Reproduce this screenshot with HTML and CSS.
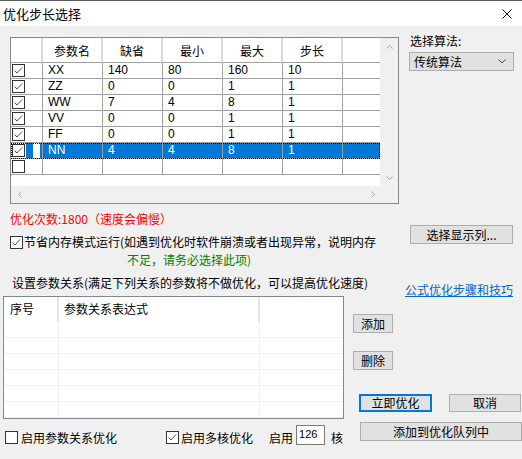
FILE: index.html
```html
<!DOCTYPE html>
<html lang="zh-CN">
<head>
<meta charset="utf-8">
<title>优化步长选择</title>
<link rel="stylesheet" href="styles.css">
</head>
<body>
<div class="window">
  <div class="titlebar">
    <span class="title">优化步长选择</span>
    <svg class="close" width="10" height="10" viewBox="0 0 10 10"><path d="M0.5 0.5L9.5 9.5M9.5 0.5L0.5 9.5" stroke="#000" stroke-width="1" fill="none"/></svg>
  </div>
  <div class="content">
    <div class="top">
      <div class="grid">
        <div class="grid-main">
          <div class="gview">
            <div class="grow ghead">
              <div class="gc"></div><div class="gc">参数名</div><div class="gc">缺省</div><div class="gc">最小</div><div class="gc">最大</div><div class="gc">步长</div><div class="gc last"></div>
            </div>
            <div class="grow">
              <div class="gc chk"><svg class="cb" viewBox="0 0 13 13"><rect x=".5" y=".5" width="12" height="12" fill="#fff" stroke="#333"/><path d="M2.5 6.5l2.5 2.5 5-5.5" fill="none" stroke="#555"/></svg></div>
              <div class="gc">XX</div><div class="gc">140</div><div class="gc">80</div><div class="gc">160</div><div class="gc">10</div><div class="gc last"></div>
            </div>
            <div class="grow">
              <div class="gc chk"><svg class="cb" viewBox="0 0 13 13"><rect x=".5" y=".5" width="12" height="12" fill="#fff" stroke="#333"/><path d="M2.5 6.5l2.5 2.5 5-5.5" fill="none" stroke="#555"/></svg></div>
              <div class="gc">ZZ</div><div class="gc">0</div><div class="gc">0</div><div class="gc">1</div><div class="gc">1</div><div class="gc last"></div>
            </div>
            <div class="grow">
              <div class="gc chk"><svg class="cb" viewBox="0 0 13 13"><rect x=".5" y=".5" width="12" height="12" fill="#fff" stroke="#333"/><path d="M2.5 6.5l2.5 2.5 5-5.5" fill="none" stroke="#555"/></svg></div>
              <div class="gc">WW</div><div class="gc">7</div><div class="gc">4</div><div class="gc">8</div><div class="gc">1</div><div class="gc last"></div>
            </div>
            <div class="grow">
              <div class="gc chk"><svg class="cb" viewBox="0 0 13 13"><rect x=".5" y=".5" width="12" height="12" fill="#fff" stroke="#333"/><path d="M2.5 6.5l2.5 2.5 5-5.5" fill="none" stroke="#555"/></svg></div>
              <div class="gc">VV</div><div class="gc">0</div><div class="gc">0</div><div class="gc">1</div><div class="gc">1</div><div class="gc last"></div>
            </div>
            <div class="grow">
              <div class="gc chk"><svg class="cb" viewBox="0 0 13 13"><rect x=".5" y=".5" width="12" height="12" fill="#fff" stroke="#333"/><path d="M2.5 6.5l2.5 2.5 5-5.5" fill="none" stroke="#555"/></svg></div>
              <div class="gc">FF</div><div class="gc">0</div><div class="gc">0</div><div class="gc">1</div><div class="gc">1</div><div class="gc last"></div>
            </div>
            <div class="grow sel">
              <div class="gc chk"><svg class="cb" viewBox="0 0 13 13"><rect x=".5" y=".5" width="12" height="12" fill="#fff" stroke="#333"/><path d="M2.5 6.5l2.5 2.5 5-5.5" fill="none" stroke="#555"/></svg></div>
              <div class="gc">NN</div><div class="gc">4</div><div class="gc">4</div><div class="gc">8</div><div class="gc">1</div><div class="gc last"></div>
            </div>
            <div class="grow">
              <div class="gc chk"><svg class="cb" viewBox="0 0 13 13"><rect x=".5" y=".5" width="12" height="12" fill="#fff" stroke="#333"/></svg></div>
              <div class="gc"></div><div class="gc"></div><div class="gc"></div><div class="gc"></div><div class="gc"></div><div class="gc last"></div>
            </div>
          </div>
          <div class="vscroll">
            <svg width="7" height="4" viewBox="0 0 7 4"><path d="M0.5 3.5L3.5 0.5L6.5 3.5" fill="none" stroke="#a6a6a6"/></svg>
            <svg width="7" height="4" viewBox="0 0 7 4"><path d="M0.5 0.5L3.5 3.5L6.5 0.5" fill="none" stroke="#a6a6a6"/></svg>
          </div>
        </div>
        <div class="hrow">
          <div class="hscroll">
            <svg width="4" height="7" viewBox="0 0 4 7"><path d="M3.5 0.5L0.5 3.5L3.5 6.5" fill="none" stroke="#a6a6a6"/></svg>
            <svg width="4" height="7" viewBox="0 0 4 7"><path d="M0.5 0.5L3.5 3.5L0.5 6.5" fill="none" stroke="#a6a6a6"/></svg>
          </div>
          <div class="corner"></div>
        </div>
      </div>
      <div class="algo">
        <div class="algo-label">选择算法:</div>
        <div class="combo">
          <span>传统算法</span>
          <svg width="8" height="5" viewBox="0 0 8 5"><path d="M0.5 0.5L4 4L7.5 0.5" fill="none" stroke="#444"/></svg>
        </div>
      </div>
    </div>

    <div class="count">优化次数:1800（速度会偏慢）</div>

    <div class="mem">
      <div class="memleft">
        <svg class="cb" viewBox="0 0 13 13"><rect x=".5" y=".5" width="12" height="12" fill="#fff" stroke="#333"/><path d="M2.5 6.5l2.5 2.5 5-5.5" fill="none" stroke="#555"/></svg>
        <div class="memtext">
          <div>节省内存模式运行(如遇到优化时软件崩溃或者出现异常，说明内存</div>
          <div class="green">不足，请务必选择此项)</div>
        </div>
      </div>
      <div class="btn showcols">选择显示列...</div>
    </div>

    <div class="rel">
      <div class="reltext">设置参数关系(满足下列关系的参数将不做优化，可以提高优化速度)</div>
      <div class="link">公式优化步骤和技巧</div>
    </div>

    <div class="lower">
      <div class="lowleft">
        <div class="rtable">
          <div class="rrow rhead"><div class="rc">序号</div><div class="rc">参数关系表达式</div><div class="rc last"></div></div>
          <div class="rrow"><div class="rc"></div><div class="rc"></div><div class="rc last"></div></div>
          <div class="rrow"><div class="rc"></div><div class="rc"></div><div class="rc last"></div></div>
          <div class="rrow"><div class="rc"></div><div class="rc"></div><div class="rc last"></div></div>
          <div class="rrow"><div class="rc"></div><div class="rc"></div><div class="rc last"></div></div>
          <div class="rrow"><div class="rc"></div><div class="rc"></div><div class="rc last"></div></div>
          <div class="rrow"><div class="rc"></div><div class="rc"></div><div class="rc last"></div></div>
        </div>
        <div class="opts">
          <svg class="cb" viewBox="0 0 13 13"><rect x=".5" y=".5" width="12" height="12" fill="#fff" stroke="#333"/></svg>
          <span class="opt opt1">启用参数关系优化</span>
          <svg class="cb cb2" viewBox="0 0 13 13"><rect x=".5" y=".5" width="12" height="12" fill="#fff" stroke="#333"/><path d="M2.5 6.5l2.5 2.5 5-5.5" fill="none" stroke="#555"/></svg>
          <span class="opt opt2">启用多核优化</span>
          <span class="opt opt3">启用</span>
          <div class="num">126</div>
          <span class="opt opt4">核</span>
        </div>
      </div>
      <div class="lowright">
        <div class="btn small">添加</div>
        <div class="btn small del">删除</div>
        <div class="actions">
          <div class="btn act primary">立即优化</div>
          <div class="btn act cancel">取消</div>
        </div>
        <div class="btn queue">添加到优化队列中</div>
      </div>
    </div>
  </div>
</div>
</body>
</html>
```

FILE: styles.css
```css
* { box-sizing: border-box; }

body {
  margin: 0;
  font-family: "Noto Sans CJK SC", "Liberation Sans", sans-serif;
  font-size: 12px;
  color: #000;
}

.window {
  width: 522px;
  height: 459px;
  background: #f0f0f0;
  border-top: 1px solid #5a5a5a;
  overflow: hidden;
}

.titlebar {
  height: 25px;
  background: #fff;
  display: flex;
  align-items: center;
  justify-content: space-between;
  padding: 0 10px 0 3px;
}
.title { font-size: 13px; line-height: 16px; }
.close { display: block; margin-top: 1px; }

.cb { width: 13px; height: 13px; display: block; flex: none; }

/* top area */
.top {
  display: flex;
  margin-top: 11px;
  padding-left: 10px;
  height: 167px;
}
.grid {
  width: 389px;
  height: 167px;
  border: 1px solid #828790;
  background: #fff;
  display: flex;
  flex-direction: column;
}
.grid-main { display: flex; height: 148px; }
.gview { width: 369px; background: #fff; }
.grow {
  display: grid;
  grid-template-columns: 32px 60px 60px 60px 60px 60px 37px;
  height: 16px;
}
.gc {
  border-right: 1px solid #a0a0a0;
  border-bottom: 1px solid #a0a0a0;
  padding-left: 5px;
  line-height: 15px;
  font-family: "Liberation Sans", sans-serif;
  font-size: 12px;
  white-space: nowrap;
}
.gc.last { border-right: none; }
.gc.chk { padding: 1px 0 0 1px; }

.ghead { height: 25px; }
.ghead .gc {
  font-family: "Noto Sans CJK SC", sans-serif;
  text-align: center;
  padding: 2px 0 0 0;
  line-height: 22px;
  border-right: 2px solid #dcdcdc;
}
.ghead .gc.last { border-right: none; }

.grow.sel { outline: 1px dotted #000; outline-offset: -1px; position: relative; }
.grow.sel .gc { background: #0078d7; color: #fff; }
.grow.sel .gc.chk {
  background: linear-gradient(to right, #fff 0 15px, #0078d7 15px 22px, #fff 22px 29px, #0078d7 29px);
}

.vscroll {
  width: 18px;
  background: #f0f0f0;
  display: flex;
  flex-direction: column;
  justify-content: space-between;
  align-items: center;
  padding: 7px 0 6px 0;
}
.vscroll svg, .hscroll svg { display: block; }
.hrow { display: flex; height: 17px; }
.hscroll {
  width: 369px;
  background: #f0f0f0;
  display: flex;
  align-items: center;
  justify-content: space-between;
  padding: 0 5px 0 7px;
}
.corner { width: 18px; background: #f0f0f0; }

.algo { margin-left: 10px; margin-top: -3px; }
.algo-label { line-height: 14px; padding-left: 1px; }
.combo {
  margin-top: 4px;
  width: 105px;
  height: 19px;
  border: 1px solid #adadad;
  background: #e1e1e1;
  display: flex;
  align-items: center;
  justify-content: space-between;
  padding: 0 7px 0 4px;
  line-height: 16px;
}
.combo svg { display: block; }

/* count */
.count {
  color: #f00;
  margin: 8px 0 0 10px;
  line-height: 14px;
}

/* memory option */
.mem { display: flex; align-items: flex-start; padding-left: 10px; }
.memleft { display: flex; margin-top: 9px; white-space: nowrap; }
.memleft .cb { margin-top: 1px; }
.memtext { margin-left: 1px; line-height: 14px; }
.green { color: #008000; padding-left: 103px; margin-top: 4px; }

.btn {
  background: #e1e1e1;
  border: 1px solid #adadad;
  display: flex;
  align-items: center;
  justify-content: center;
  height: 19px;
  line-height: 16px;
  white-space: nowrap;
}
.showcols {
  margin-left: auto;
  margin-right: 9px;
  margin-top: -1px;
  width: 103px;
}

/* relation */
.rel { display: flex; align-items: flex-start; height: 29px; padding-left: 12px; }
.reltext { margin-top: 9px; line-height: 14px; white-space: nowrap; }
.link {
  margin-left: auto;
  margin-right: 9px;
  margin-top: 16px;
  line-height: 14px;
  color: #0066cc;
  text-decoration: underline;
  white-space: nowrap;
}

/* lower */
.lower { display: flex; align-items: flex-start; }
.lowleft { width: 344px; padding-left: 3px; }
.rtable {
  width: 341px;
  height: 123px;
  border: 1px solid #828790;
  background: #fff;
  overflow: hidden;
}
.rrow {
  display: grid;
  grid-template-columns: 55px 201px 83px;
  height: 16px;
}
.rc { border-right: 1px solid #f0f0f0; border-bottom: 1px solid #f0f0f0; }
.rc.last { border-right: none; }
.rhead { height: 25px; }
.rhead .rc {
  border-bottom: none;
  border-right: 2px solid #e5e5e5;
  line-height: 24px;
  padding-left: 6px;
}
.rhead .rc:nth-child(2) { padding-left: 5px; }
.rhead .rc.last { border-right: none; }

.opts {
  display: flex;
  align-items: flex-start;
  margin-top: 6px;
  padding-left: 2px;
  height: 20px;
  white-space: nowrap;
}
.opts .cb { margin-top: 6px; }
.opt { line-height: 14px; margin-top: 6px; }
.opt1 { margin-left: 3px; }
.cb2 { margin-left: 49px; }
.opt2 { margin-left: 2px; }
.opt3 { margin-left: 16px; }
.num {
  margin-left: 3px;
  width: 29px;
  height: 20px;
  border: 1px solid #7a7a7a;
  background: #fff;
  font-family: "Liberation Sans", sans-serif;
  font-size: 11px;
  line-height: 14px;
  padding: 1px 0 0 2px;
}
.opt4 { margin-left: 6px; }

.lowright { margin-left: 9px; width: 169px; }
.small { width: 40px; margin-top: 18px; }
.actions { display: flex; margin-top: 24px; margin-left: 6px; }
.act { width: 73px; height: 18px; }
.primary { border: 2px solid #0078d7; }
.cancel { margin-left: 17px; width: 72px; }
.queue { margin-top: 10px; margin-left: 7px; width: 162px; }
```
